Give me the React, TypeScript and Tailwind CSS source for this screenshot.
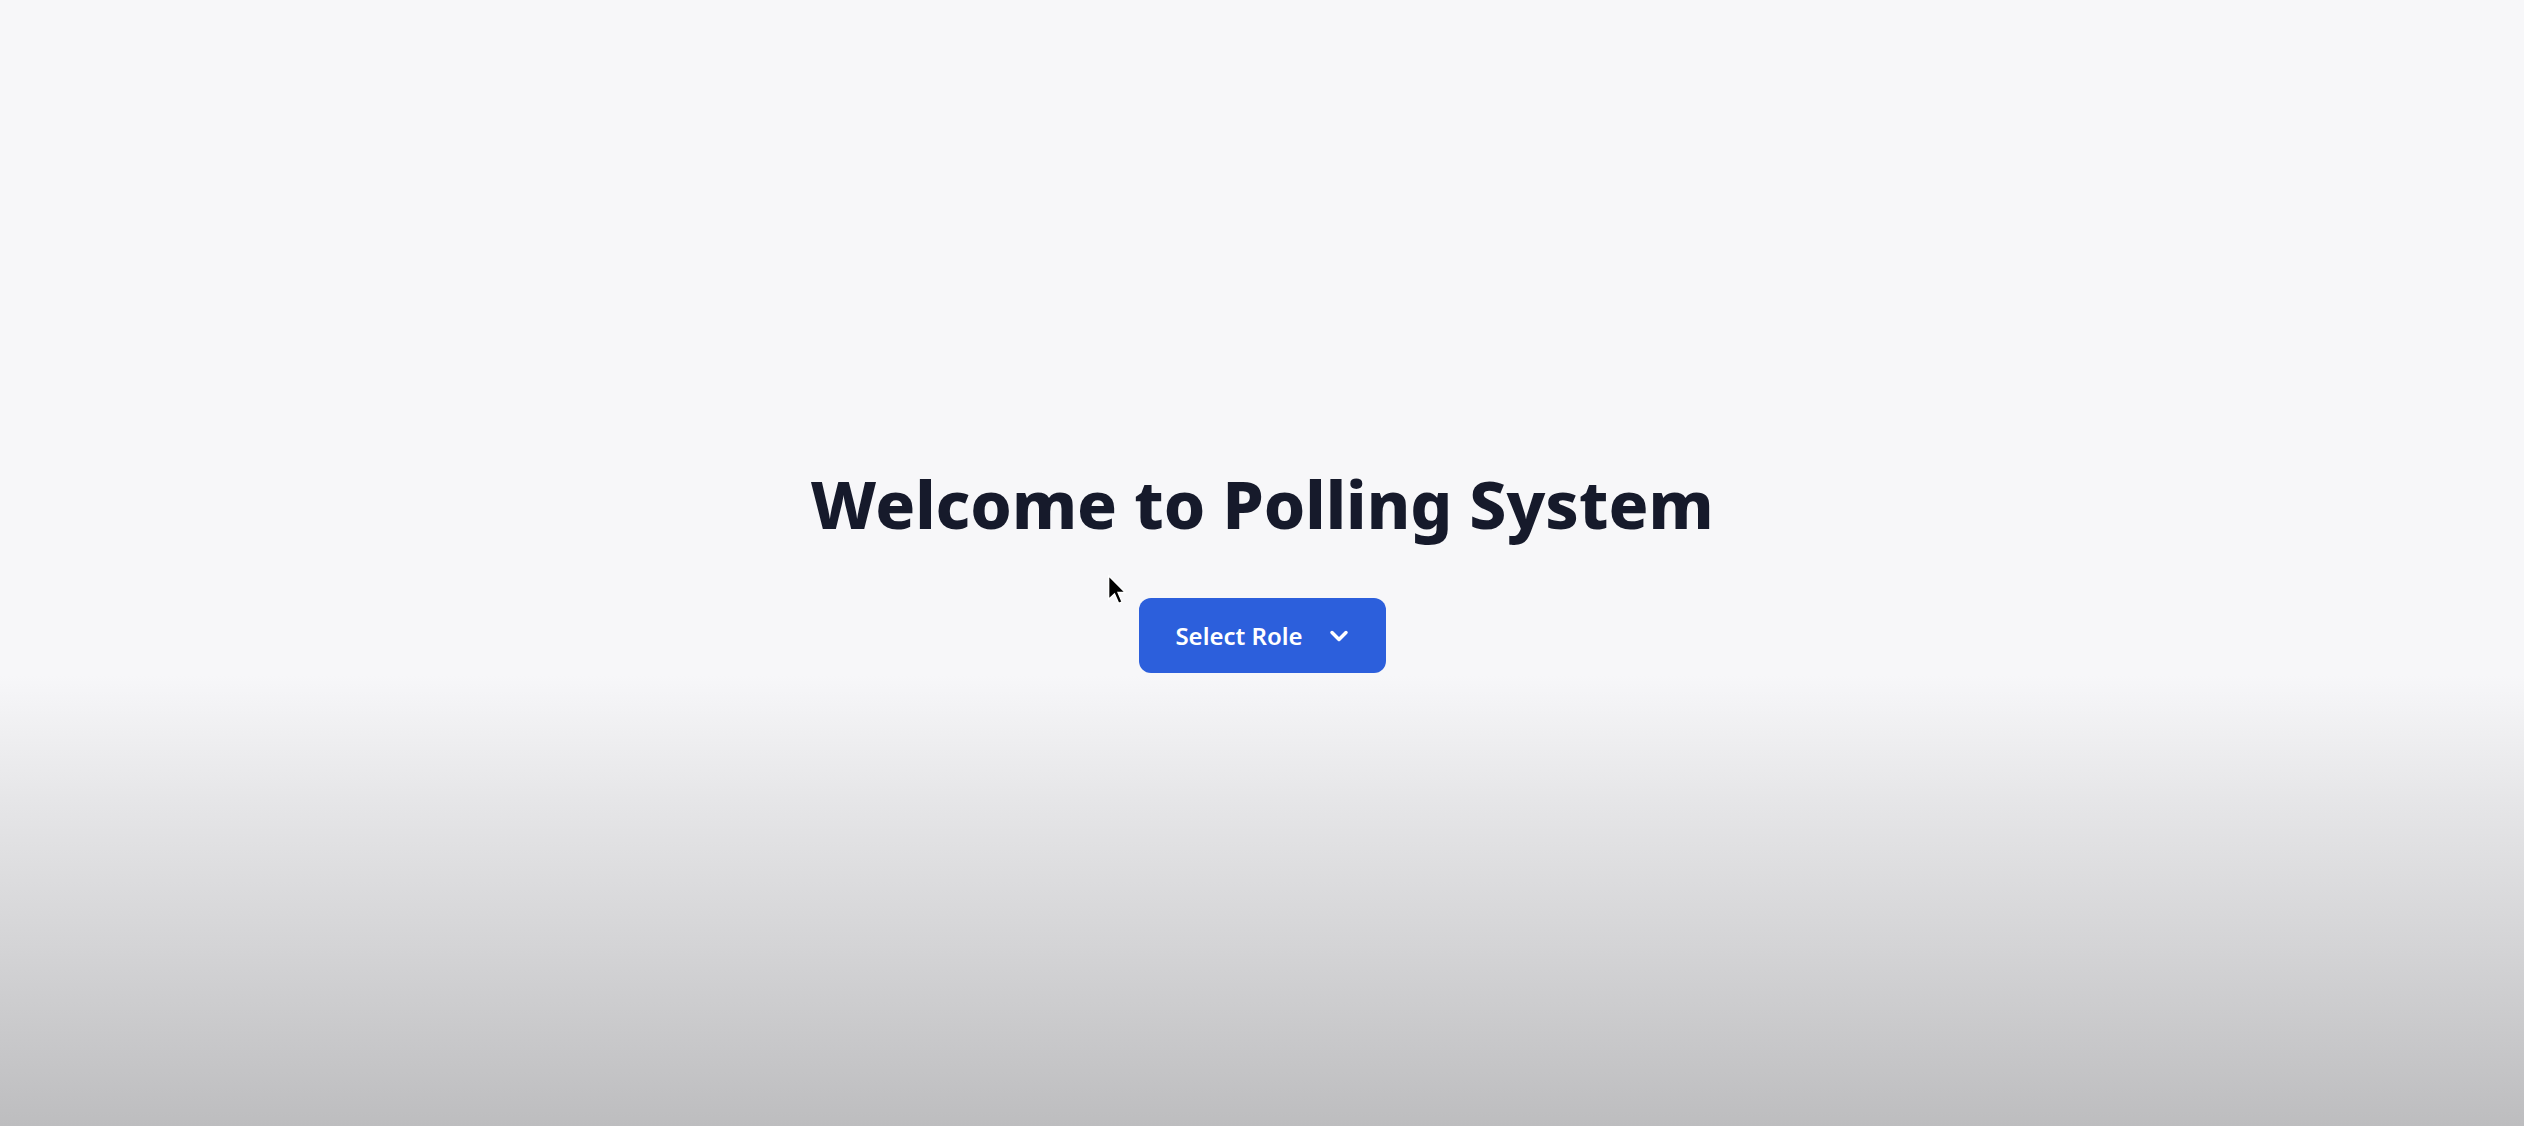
import { ChevronDown } from "lucide-react";

const Cursor = () => (
  <svg
    className="absolute left-[1107px] top-[574px] pointer-events-none"
    width="20"
    height="32"
    viewBox="0 0 12 19"
  >
    <path d="M1 1 L1 15 L4.5 11.8 L7 17.5 L9 16.6 L6.6 11 L11 11 Z" fill="#000" stroke="#fff" strokeWidth="0.8" />
  </svg>
);

export default function App() {
  return (
    <div className="relative min-h-screen w-full bg-[linear-gradient(to_bottom,#f7f7f9_0%,#f7f7f9_60%,#e6e6e8_71%,#d4d4d6_84%,#bdbdbf_100%)] font-['Noto_Sans',sans-serif]">
      <div className="flex flex-col items-center pt-[462px]">
        <h1 className="text-[66px] leading-[82px] font-extrabold text-[#161a2b]">
          Welcome to Polling System
        </h1>
        <button className="mt-[54px] flex h-[75px] w-[247px] items-center justify-center gap-[22px] rounded-xl bg-[#2c5fdc] pl-1 text-[24px] font-semibold text-white">
          <span>Select Role</span>
          <ChevronDown className="h-7 w-7" strokeWidth={3} />
        </button>
      </div>
      <Cursor />
    </div>
  );
}
